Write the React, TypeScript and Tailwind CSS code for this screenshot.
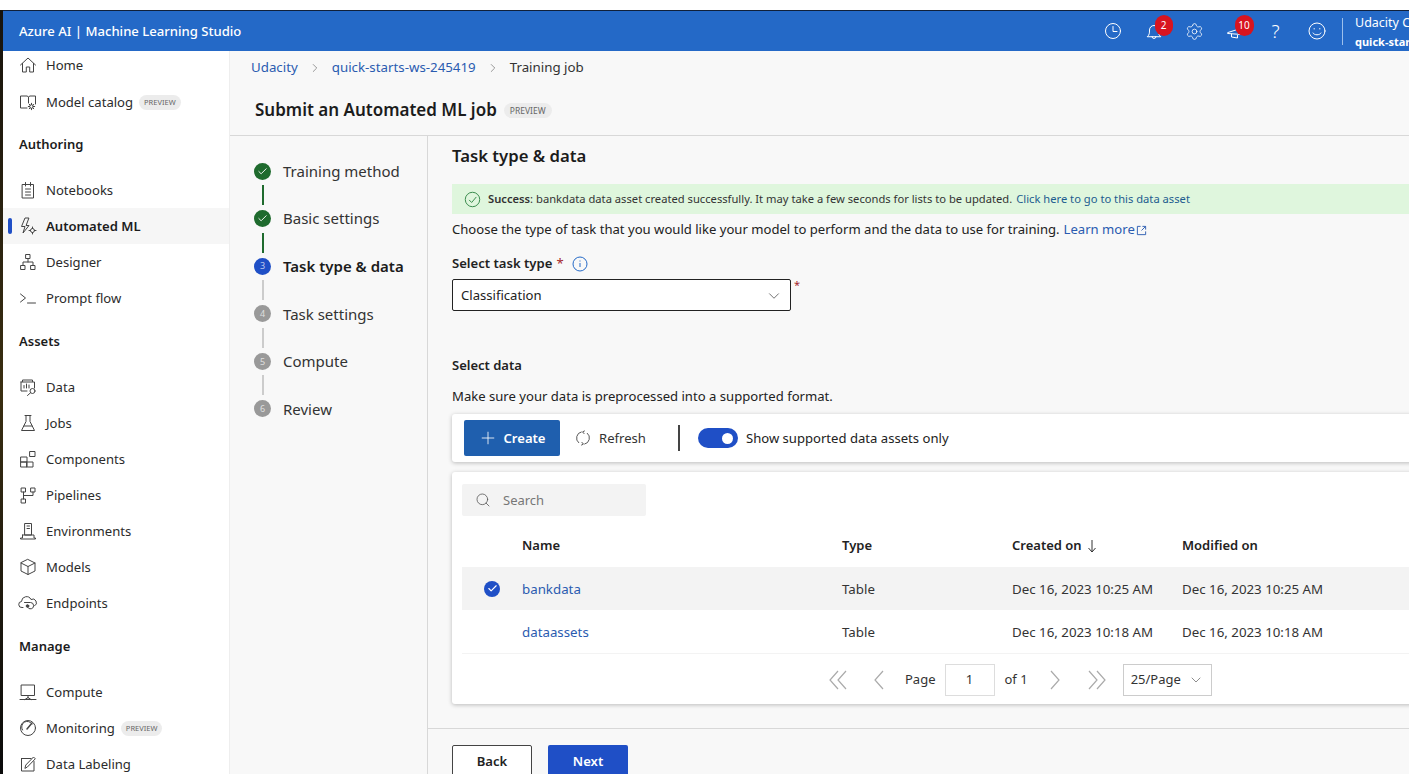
import React from 'react'
import { ChevronDown, ChevronRight, Plus, Search, Check, Settings } from 'lucide-react'

function Svg({ children, size = 20 }: { children: React.ReactNode; size?: number }) {
    return (
        <svg width={size} height={size} viewBox="0 0 20 20" fill="none" stroke="currentColor" strokeWidth="1" strokeLinecap="round" strokeLinejoin="round">
            {children}
        </svg>
    )
}

const icons: Record<string, React.ReactNode> = {
    home: <path d="M2.500 10 10 3l7.500 7M4.500 8.500V17h3.800v-5h3.400v5h3.800V8.500" />,
    catalog: (
        <>
            <path d="M9 16H2.500V4h7l1 1.500V11M10.500 5.500l1-1.500h6v8" />
            <circle cx="13.500" cy="14.500" r="1.800" />
            <path d="M13.500 11.300v1.200M13.500 16.500v1.200M10.300 14.500h1.200M15.500 14.500h1.200M11.300 12.300l.8.800M15 16l.8.800M15.800 12.300l-.8.800M12 16l-.8.800" />
        </>
    ),
    notebooks: (
        <>
            <path d="M4.500 4.500h11V18h-11zM7.500 2.500v3.500M12.500 2.500v3.500" />
            <path d="M7.500 9h5M7.500 12h5M7.500 15h5" />
        </>
    ),
    automl: (
        <>
            <path d="M10.500 2H7L3.500 10.500h3.500L5 17l6-7.500H8.500z" />
            <circle cx="14.500" cy="14.500" r="2" />
            <path d="M14.500 11v1.500M14.500 16.500V18M11 14.500h1.500M16.500 14.500H18" />
        </>
    ),
    designer: (
        <>
            <path d="M8 2.500h4v4H8zM3 13.500h4v4H3zM13 13.500h4v4h-4z" />
            <path d="M10 6.500V10M5 13.500V10h10v3.500" />
        </>
    ),
    prompt: <path d="m2.500 6 5 4-5 4M9.500 15h8" />,
    data: (
        <>
            <path d="M4.500 4.500V3h10v1.500M3 5h13.500v6M3 5v9h6" />
            <path d="M6 11V8.500M8.500 11V7M11 11V8" />
            <circle cx="14.500" cy="14" r="2.500" />
            <path d="m12.500 15.800-3 2.700" />
        </>
    ),
    jobs: <path d="M7 2.500h6M8 2.500v6L3.500 17.500h13L12 8.500v-6M6 13h8" />,
    components: <path d="M3 8h6v5H3zM3 13h6v5H3zM9 13h6v5H9zM12 2.500h5v5h-5z" />,
    pipelines: (
        <>
            <path d="M3.500 3h4v4h-4zM13 3h4v4h-4zM3.500 14h4v4h-4z" />
            <path d="M5.500 7v7M5.500 10.500H15V7" />
        </>
    ),
    environments: (
        <>
            <path d="M7 2.500h6.500V14H7zM9 5h2.500M9 7.500h2.500" />
            <path d="M4.500 14v3H2.500v1h15v-1H16V14H4.500" />
        </>
    ),
    models: <path d="M10 2.500 17 6v8l-7 3.500L3 14V6zM3 6l7 3.500L17 6M10 9.500v8" />,
    endpoints: (
        <>
            <path d="M5 14.500H4a3 3 0 0 1-.5-6A5 5 0 0 1 13 6.500a3.500 3.500 0 0 1 3.500 6.500" />
            <path d="M6.500 9.500h6a3.200 3.200 0 1 1-3 4.500" />
            <circle cx="9.500" cy="13" r="1.300" fill="currentColor" />
        </>
    ),
    compute: <path d="M3.500 3h13v10.500h-13zM10 13.500V16M2 17.500h16M7 17.500 10 15.500l3 2" />,
    monitoring: (
        <>
            <circle cx="10" cy="10" r="7.500" />
            <path d="M4.500 12A5.600 5.600 0 0 1 14 6" />
            <path d="m9 11 5-6" strokeWidth="1.500" />
        </>
    ),
    labeling: (
        <>
            <path d="M3.500 4.500H13M3.500 4.500v12.500h12.500V7.500" />
            <path d="m7 14 .8-3L15.500 3l1.800 1.800-7.700 8z" />
        </>
    ),
}

function Preview({ large }: { large?: boolean }) {
    return <span className={`rounded-full bg-[#ececec] py-[2px] leading-[11px] text-[#666666] ${large ? 'ml-[7px] px-[6px] text-[8.500px]' : 'ml-[6px] px-[5px] text-[7.500px]'}`}>PREVIEW</span>
}

function NavItem({ icon, label, preview, active, className }: { icon: string; label: string; preview?: boolean; active?: boolean; className?: string }) {
    return (
        <div className={`relative flex h-9 items-center pl-[15px] ${active ? 'bg-[#f6f6f6] font-semibold text-[#1c1c1c]' : 'text-[#2c2c2c]'} ${className ?? ''}`}>
            {active && <span className="absolute left-[5px] top-[10px] h-[16px] w-1 rounded-full bg-[#1f4fc6]" />}
            <span className="mr-[8px] flex w-[20px] justify-center text-[#444444]">
                <Svg>{icons[icon]}</Svg>
            </span>
            <span className="pt-[2px] text-[13.100px]">{label}</span>
            {preview && <Preview />}
        </div>
    )
}

function NavHeading({ label, className }: { label: string; className: string }) {
    return <div className={`flex h-9 items-center pl-[16px] pt-[2px] text-[13px] font-semibold text-[#1c1c1c] ${className}`}>{label}</div>
}

function Sidebar() {
    return (
        <div className="h-full w-[226px] shrink-0 overflow-hidden bg-white">
            <NavItem icon="home" label="Home" className="!h-[28px]" />
            <NavItem icon="catalog" label="Model catalog" preview className="mt-[5px]" />
            <NavHeading label="Authoring" className="mt-[6px]" />
            <NavItem icon="notebooks" label="Notebooks" className="mt-[10px]" />
            <NavItem icon="automl" label="Automated ML" active />
            <NavItem icon="designer" label="Designer" />
            <NavItem icon="prompt" label="Prompt flow" />
            <NavHeading label="Assets" className="mt-[7px]" />
            <NavItem icon="data" label="Data" className="mt-[10px]" />
            <NavItem icon="jobs" label="Jobs" />
            <NavItem icon="components" label="Components" />
            <NavItem icon="pipelines" label="Pipelines" />
            <NavItem icon="environments" label="Environments" />
            <NavItem icon="models" label="Models" />
            <NavItem icon="endpoints" label="Endpoints" />
            <NavHeading label="Manage" className="mt-[7px]" />
            <NavItem icon="compute" label="Compute" className="mt-[10px]" />
            <NavItem icon="monitoring" label="Monitoring" preview />
            <NavItem icon="labeling" label="Data Labeling" />
        </div>
    )
}

function TopBar() {
    return (
        <div className="flex h-[40px] shrink-0 items-center bg-[#2469c7] pl-[16px] text-white">
            <span className="pt-[2px] text-[13.100px] font-medium">Azure AI | Machine Learning Studio</span>
            <div className="ml-auto flex w-[316px] shrink-0 items-center">
                <div className="flex w-[40.500px] shrink-0 justify-center">
                    <Svg>
                        <circle cx="10" cy="10" r="7.500" />
                        <path d="M10 5.500V10.500H14" />
                    </Svg>
                </div>
                <div className="relative flex w-[40.500px] shrink-0 justify-center">
                    <Svg>
                        <path d="M3.500 15.500c2-1.500 2-3.500 2-6.500a4.500 4.500 0 0 1 9 0c0 3 0 5 2 6.500zM8 15.500a2 2 0 0 0 4 0" />
                    </Svg>
                    <span className="absolute left-[21px] top-[-6px] flex h-[21px] w-[18px] items-center justify-center rounded-full bg-[#d8141f] text-[10px]">2</span>
                </div>
                <div className="flex w-[40.500px] shrink-0 justify-center">
                    <Settings size={19} strokeWidth={1} />
                </div>
                <div className="relative flex w-[40.500px] shrink-0 justify-center">
                    <Svg>
                        <path d="M3 11.500 17 7v6.500L3 12.500zM6.500 13v3l6 1v-2.500" />
                    </Svg>
                    <span className="absolute left-[20px] top-[-6px] flex h-[21px] w-[19px] items-center justify-center rounded-full bg-[#d8141f] text-[10px]">10</span>
                </div>
                <div className="flex w-[41px] shrink-0 justify-center text-[19px] font-light leading-none">?</div>
                <div className="flex w-[41px] shrink-0 justify-center">
                    <Svg>
                        <circle cx="10" cy="10" r="8" />
                        <path d="M6 12c1 2.500 7 2.500 8 0M7.200 7.500v.5M12.800 7.500v.5" />
                    </Svg>
                </div>
                <div className="ml-[5px] h-[27px] w-px shrink-0 bg-[#9dc0ec]" />
                <div className="ml-[12px] whitespace-nowrap">
                    <div className="text-[12.500px] leading-[20px]">Udacity C</div>
                    <div className="text-[11px] font-bold leading-[17px]">quick-star</div>
                </div>
            </div>
        </div>
    )
}

const steps = [
    { label: 'Training method', state: 'done' },
    { label: 'Basic settings', state: 'done' },
    { label: 'Task type & data', state: 'current' },
    { label: 'Task settings', state: 'todo' },
    { label: 'Compute', state: 'todo' },
    { label: 'Review', state: 'todo' },
]

function Steps() {
    return (
        <div className="w-[197px] shrink-0 pl-[24px] pt-[25px]">
            {steps.map((s, i) => (
                <div key={s.label}>
                    <div className="flex h-[20px] items-center">
                        <span className={`flex h-[17px] w-[17px] items-center justify-center rounded-full text-[9px] text-white/70 ${s.state === 'done' ? 'bg-[#1f6b2e]' : s.state === 'current' ? 'bg-[#1f4fc6]' : 'bg-[#999999]'}`}>
                            {s.state === 'done' ? <Check size={11} strokeWidth={2} className="text-white" /> : i + 1}
                        </span>
                        <span className={`ml-[12px] whitespace-nowrap text-[15px] ${s.state === 'current' ? 'font-semibold text-[#1c1c1c]' : 'text-[#333333]'}`}>{s.label}</span>
                    </div>
                    {i < steps.length - 1 && (
                        <div className={`mb-[3.600px] ml-[8px] mt-[4px] h-[20px] w-[2px] ${i < 2 ? 'bg-[#1f6b2e]' : 'bg-[#cccccc]'}`} />
                    )}
                </div>
            ))}
        </div>
    )
}

const rows = [
    { name: 'bankdata', created: 'Dec 16, 2023 10:25 AM', modified: 'Dec 16, 2023 10:25 AM', selected: true },
    { name: 'dataassets', created: 'Dec 16, 2023 10:18 AM', modified: 'Dec 16, 2023 10:18 AM', selected: false },
]

function PagerChevron({ d, width }: { d: string; width: number }) {
    return (
        <svg width={width} height="20" viewBox={`0 0 ${width} 20`} fill="none" stroke="#aaaaaa" strokeWidth="1.200" className="shrink-0">
            <path d={d} />
        </svg>
    )
}

function DataTable() {
    return (
        <div className="-mr-4 mt-[10px] rounded-[3px] bg-white pl-[10px] pt-[12px] shadow-[0_1px_4px_rgba(0,0,0,0.25)]">
            <div className="flex h-[32px] w-[184px] items-center rounded-[2px] bg-[#f3f3f3] pl-[13px] text-[#777777]">
                <Search size={16} strokeWidth={1.2} className="text-[#555555]" />
                <span className="ml-[12px] pt-[2px] text-[13px]">Search</span>
            </div>
            <div className="mt-[15px] flex h-[30px] items-center text-[13px] font-semibold text-[#222222]">
                <span className="ml-[60px] w-[320px]">Name</span>
                <span className="w-[170px]">Type</span>
                <span className="flex w-[170px] items-center">
                    Created on
                    <svg width="10" height="14" viewBox="0 0 10 14" fill="none" stroke="#333333" strokeWidth="1" className="ml-[5px]">
                        <path d="M5 1v12M1.500 9 5 13l3.500-4" />
                    </svg>
                </span>
                <span>Modified on</span>
            </div>
            {rows.map((r) => (
                <div key={r.name} className={`flex items-center pt-[2px] text-[13.300px] text-[#333333] ${r.selected ? 'mt-[6px] h-[43px] bg-[#f3f3f3]' : 'h-[44px] border-b border-[#f3f3f3]'}`}>
                    <span className="-mt-[2px] flex w-[60px] justify-center pr-[14px]">
                        {r.selected && (
                            <span className="ml-[14px] flex h-4 w-4 items-center justify-center rounded-full bg-[#1f4fc6]">
                                <Check size={11} strokeWidth={2.5} className="text-white" />
                            </span>
                        )}
                    </span>
                    <span className="w-[320px] text-[#2a5bb0]">{r.name}</span>
                    <span className="w-[170px]">Table</span>
                    <span className="w-[170px] whitespace-nowrap">{r.created}</span>
                    <span className="whitespace-nowrap">{r.modified}</span>
                </div>
            ))}
            <div className="flex h-[50px] items-center pl-[367px] pt-[1px] text-[13px] text-[#333333]">
                <PagerChevron width={18} d="M9 1 1 10l8 9M17 1 9 10l8 9" />
                <span className="ml-[27px]">
                    <PagerChevron width={10} d="M9 1 1 10l8 9" />
                </span>
                <span className="ml-[21px]">Page</span>
                <span className="ml-[9px] flex h-[32px] w-[50px] items-center justify-center border border-[#dddddd]">1</span>
                <span className="ml-[10px]">of 1</span>
                <span className="ml-[22px]">
                    <PagerChevron width={10} d="m1 1 8 9-8 9" />
                </span>
                <span className="ml-[28px]">
                    <PagerChevron width={18} d="m1 1 8 9-8 9M9 1l8 9-8 9" />
                </span>
                <span className="ml-[17px] flex h-[32px] w-[89px] items-center justify-between border border-[#cccccc] px-[7px]">
                    25/Page
                    <ChevronDown size={16} strokeWidth={1} className="text-[#555555]" />
                </span>
            </div>
        </div>
    )
}

function TaskPanel() {
    return (
        <div className="flex min-w-0 flex-1 flex-col border-l border-[#d8d8d8]">
            <div className="min-h-0 flex-1 overflow-hidden pl-[24px]">
                <h2 className="mt-[7px] h-[26px] text-[16.700px] font-semibold leading-[26px] text-[#1c1c1c]">Task type &amp; data</h2>
                <div className="mt-[15px] flex h-[30px] items-center whitespace-nowrap bg-[#dff6dd] pl-[12px] text-[11.200px] text-[#333333]">
                    <svg width="17" height="17" viewBox="0 0 20 20" fill="none" stroke="#1f7a35" strokeWidth="1">
                        <circle cx="10" cy="10" r="8.500" />
                        <path d="m6 10.500 3 3 5.500-6.500" />
                    </svg>
                    <span className="ml-[7px] font-semibold">Success</span>: bankdata data asset created successfully. It may take a few seconds for lists to be updated.
                    <span className="ml-1 text-[#1d5c8f]">Click here to go to this data asset</span>
                </div>
                <div className="mt-[6px] flex h-[20px] items-center whitespace-nowrap text-[13.100px] text-[#222222]">
                    Choose the type of task that you would like your model to perform and the data to use for training.
                    <span className="ml-1 text-[#2a5bb0]">Learn more</span>
                    <svg width="11" height="11" viewBox="0 0 12 12" fill="none" stroke="#2a5bb0" strokeWidth="1" className="ml-[1px]">
                        <path d="M5 1.500H1.500v9h9V7M7 1.500h3.500V5M10.500 1.500 6 6" />
                    </svg>
                </div>
                <div className="mt-[14px] flex h-[20px] items-center text-[13.100px] font-semibold text-[#222222]">
                    Select task type <span className="ml-1 font-normal text-[#a4262c]">*</span>
                    <svg width="16" height="16" viewBox="0 0 16 16" fill="none" stroke="#2469c7" strokeWidth="1" className="ml-[8px]">
                        <circle cx="8" cy="8" r="7" />
                        <path d="M8 7v4M8 4.500v1" />
                    </svg>
                </div>
                <div className="mt-[5px] flex items-start">
                    <div className="flex h-[32px] w-[339px] items-center justify-between rounded-[2px] border border-[#222222] bg-white pl-2 pr-[7px] pt-[1px] text-[13.100px] text-[#222222]">
                        Classification
                        <ChevronDown size={18} strokeWidth={1} className="text-[#444444]" />
                    </div>
                    <span className="ml-[3px] text-[11px] leading-[12px] text-[#a4262c]">*</span>
                </div>
                <div className="mt-[44px] h-[20px] text-[13px] font-semibold leading-[20px] text-[#222222]">Select data</div>
                <div className="mt-[11px] h-[20px] text-[13.100px] leading-[20px] text-[#222222]">Make sure your data is preprocessed into a supported format.</div>
                <div className="-mr-4 mt-[8px] flex h-[48px] items-center rounded-[3px] bg-white pl-[12px] text-[13.100px] shadow-[0_1px_4px_rgba(0,0,0,0.25)]">
                    <div className="flex h-[36px] w-[96px] items-center justify-center rounded-[2px] bg-[#1f5fae] font-semibold text-white">
                        <Plus size={20} strokeWidth={1} className="mr-[5px]" />
                        <span className="pt-[1px]">Create</span>
                    </div>
                    <svg width="18" height="18" viewBox="0 0 20 20" fill="none" stroke="#444444" strokeWidth="1" className="ml-[14px]">
                        <path d="M8.500 3.200A7 7 0 0 0 5.500 15.500M11.500 16.800A7 7 0 0 0 14.500 4.500M12 2l-2.500 1.200L11.500 5.500M8 18l2.500-1.200-2-2.300" />
                    </svg>
                    <span className="ml-[7px] pt-[2px] text-[#333333]">Refresh</span>
                    <span className="ml-[32px] h-[26px] w-[2px] bg-[#444444]" />
                    <span className="ml-[18px] flex h-[20px] w-[40px] items-center justify-end rounded-full bg-[#1f4fc6] pr-[5px]">
                        <span className="h-[11px] w-[11px] rounded-full bg-white" />
                    </span>
                    <span className="ml-2 pt-[2px] text-[#222222]">Show supported data assets only</span>
                </div>
                <DataTable />
            </div>
            <div className="h-[46px] shrink-0 border-t border-[#d8d8d8] pl-[24px] pt-[16px] text-[13.100px] font-semibold">
                <div className="flex gap-4">
                    <div className="flex h-[32px] w-[80px] items-center justify-center rounded-[2px] border border-[#444444] bg-white pt-[2px] text-[#222222]">Back</div>
                    <div className="flex h-[32px] w-[80px] items-center justify-center rounded-[2px] bg-[#1f4fc6] pt-[2px] text-white">Next</div>
                </div>
            </div>
        </div>
    )
}

export default function App() {
    return (
        <div className="flex h-[774px] w-[1409px] flex-col overflow-hidden bg-white font-['Noto_Sans',sans-serif]">
            <div className="h-[10px] shrink-0 bg-white" />
            <div className="flex min-h-0 flex-1">
                <div className="w-[3px] shrink-0 bg-gradient-to-b from-[#17130c] via-[#3a2e10] to-[#0a0a0a]" />
                <div className="flex min-w-0 flex-1 flex-col border-t border-[#10203a]">
                    <TopBar />
                    <div className="flex min-h-0 flex-1">
                        <Sidebar />
                        <div className="flex min-w-0 flex-1 flex-col border-l border-[#eeeeee] bg-[#f8f8f8]">
                            <div className="flex h-[34px] shrink-0 items-center pl-[21px] text-[13.300px] text-[#2a5bb0]">
                                <span>Udacity</span>
                                <ChevronRight size={14} strokeWidth={1} className="mx-[10px] text-[#555555]" />
                                <span>quick-starts-ws-245419</span>
                                <ChevronRight size={14} strokeWidth={1} className="mx-[10px] text-[#555555]" />
                                <span className="text-[#333333]">Training job</span>
                            </div>
                            <div className="flex h-[51px] shrink-0 items-center border-b border-[#d8d8d8] pl-[25px]">
                                <h1 className="text-[17px] font-semibold text-[#1c1c1c]">Submit an Automated ML job</h1>
                                <Preview large />
                            </div>
                            <div className="flex min-h-0 flex-1">
                                <Steps />
                                <TaskPanel />
                            </div>
                        </div>
                    </div>
                </div>
            </div>
        </div>
    )
}
